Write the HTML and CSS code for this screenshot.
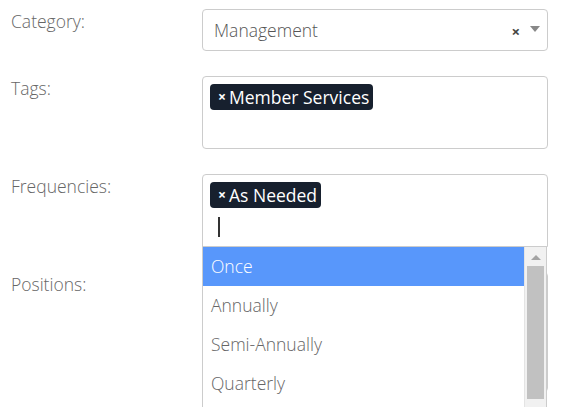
FILE: index.html
```html
<!DOCTYPE html>
<html>
<head>
<meta charset="utf-8">
<link rel="stylesheet" href="styles.css">
</head>
<body>
<div class="form">
  <div class="row">
    <div class="label">Category:</div>
    <div class="field">
      <div class="select single">
        <span class="value">Management</span>
        <span class="clear">×</span>
        <span class="arrow"></span>
      </div>
    </div>
  </div>
  <div class="row">
    <div class="label">Tags:</div>
    <div class="field">
      <div class="select multi">
        <div class="choices">
          <span class="tag"><span class="tag-x">×</span>Member Services</span>
        </div>
      </div>
    </div>
  </div>
  <div class="row">
    <div class="label">Frequencies:</div>
    <div class="field open">
      <div class="select multi">
        <div class="choices">
          <span class="tag"><span class="tag-x">×</span>As Needed</span>
        </div>
        <div class="search"><span class="caret"></span></div>
      </div>
      <div class="dropdown">
        <ul class="options">
          <li class="option active">Once</li>
          <li class="option">Annually</li>
          <li class="option">Semi-Annually</li>
          <li class="option">Quarterly</li>
        </ul>
        <div class="scrollbar">
          <div class="sb-up"></div>
          <div class="sb-thumb"></div>
        </div>
      </div>
    </div>
  </div>
  <div class="row">
    <div class="label">Positions:</div>
    <div class="field">
      <div class="select multi tall"></div>
    </div>
  </div>
</div>
</body>
</html>
```
FILE: styles.css
```css
html, body {
  margin: 0;
  padding: 0;
  background: #fff;
  overflow: hidden;
}
body {
  font-family: "Open Sans", "Liberation Sans", sans-serif;
  width: 564px;
  height: 407px;
}
.form {
  padding: 9px 0 0 11px;
  height: 398px;
  overflow: hidden;
}
.row {
  display: flex;
  margin-bottom: 25px;
}
.label {
  width: 191px;
  flex: none;
  font-size: 17.5px;
  font-weight: 300;
  color: #666;
  line-height: 24px;
}
.field {
  width: 346px;
  flex: none;
  position: relative;
}
.select {
  box-sizing: border-box;
  border: 1px solid #ccc;
  border-radius: 4px;
  background: #fff;
}
.single {
  height: 42px;
  display: flex;
  align-items: center;
  padding: 0 6px 0 11px;
}
.single .value {
  flex: 1;
  font-size: 17.5px;
  color: #555;
  font-weight: 300;
}
.clear {
  font-size: 15px;
  font-weight: 700;
  color: #444;
  margin-right: 10px;
  margin-top: 1px;
}
.arrow {
  width: 0;
  height: 0;
  border-left: 5px solid transparent;
  border-right: 5px solid transparent;
  border-top: 6px solid #888;
  margin-right: 1px;
  margin-top: -3px;
}
.multi {
  height: 73px;
  padding: 7px 7px 0 7px;
}
.tall {
  height: 120px;
}
.choices {
  display: flex;
  flex-wrap: wrap;
  gap: 4px;
}
.tag {
  display: inline-flex;
  align-items: center;
  height: 26px;
  box-sizing: border-box;
  background: #17202e;
  color: #fff;
  border-radius: 4px;
  padding: 0 4px 0 8px;
  font-size: 17.5px;
  line-height: 26px;
  font-weight: 400;
}
.tag-x {
  font-size: 14px;
  font-weight: 700;
  margin-right: 3px;
}
.search {
  height: 33px;
  display: flex;
  align-items: center;
  padding-left: 8px;
}
.caret {
  width: 2px;
  height: 20px;
  background: #333;
  margin-top: 4px;
}
.open .multi {
  border-bottom-left-radius: 0;
  border-bottom-right-radius: 0;
}
.dropdown {
  position: absolute;
  left: 0;
  top: 72px;
  width: 345px;
  height: 162px;
  box-sizing: border-box;
  border: 1px solid #ccc;
  border-bottom: none;
  background: #fff;
  z-index: 5;
  display: flex;
  overflow: hidden;
}
.options {
  list-style: none;
  margin: 0;
  padding: 0;
  flex: 1;
}
.option {
  height: 39px;
  line-height: 39px;
  padding-left: 8px;
  font-size: 17.5px;
  font-weight: 300;
  color: #666;
}
.option.active {
  background: #5897fb;
  color: #fff;
}
.scrollbar {
  width: 21px;
  background: #f1f1f1;
  border-left: 1px solid #e4e4e4;
  display: flex;
  flex-direction: column;
  align-items: center;
}
.sb-up {
  width: 0;
  height: 0;
  border-left: 5px solid transparent;
  border-right: 5px solid transparent;
  border-bottom: 5px solid #a3a3a3;
  margin: 8px 0 6px;
}
.sb-thumb {
  width: 17px;
  height: 133px;
  background: #c1c1c1;
}
```
